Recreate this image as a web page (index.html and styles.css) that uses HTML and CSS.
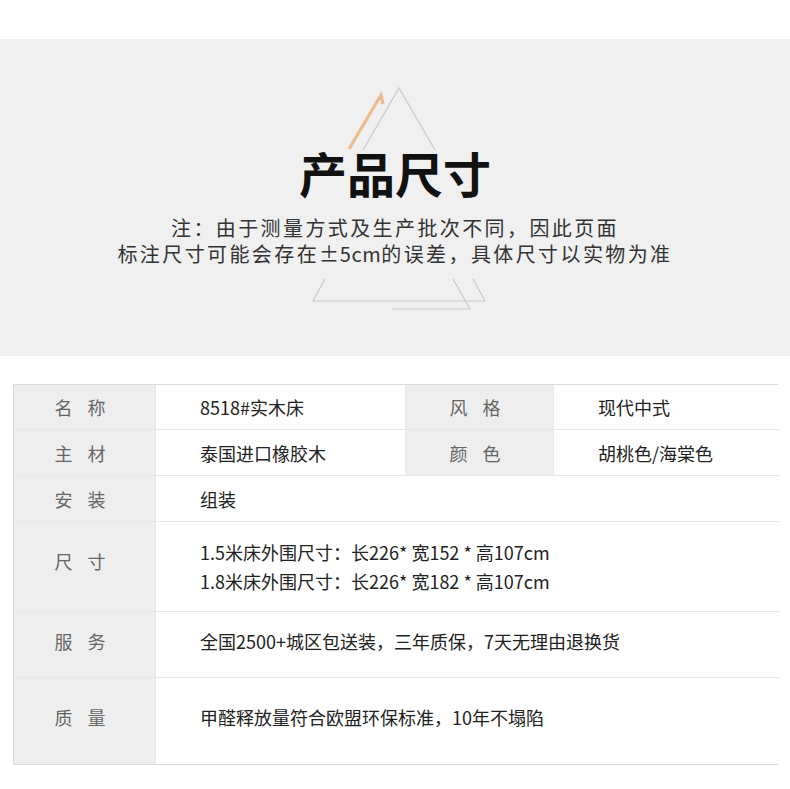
FILE: index.html
```html
<!DOCTYPE html>
<html lang="zh-CN">
<head>
<meta charset="utf-8">
<title>产品尺寸</title>
<link rel="stylesheet" href="styles.css">
</head>
<body>
<section class="hero">
  <svg class="deco" width="790" height="317" viewBox="0 0 790 317" aria-hidden="true">
    <g fill="none" stroke="#cacaca" stroke-width="1.2">
      <polyline points="363,111 399,49 435,111"/>
      <polyline points="325,240 313,262 485,262 473,240"/>
      <polyline points="453,240 470,270 392,270"/>
    </g>
    <polyline points="349,110 381,56 383,65" fill="none" stroke="#efbb8e" stroke-width="3.2"/>
  </svg>
  <h1 class="title">产品尺寸</h1>
  <p class="note"><span class="line">注：由于测量方式及生产批次不同，因此页面</span><span class="line">标注尺寸可能会存在<span class="tight">±5cm</span>的误差，具体尺寸以实物为准</span></p>
</section>

<div class="spec">
  <div class="cell label">名称</div>
  <div class="cell value">8518#实木床</div>
  <div class="cell label">风格</div>
  <div class="cell value">现代中式</div>

  <div class="cell label">主材</div>
  <div class="cell value">泰国进口橡胶木</div>
  <div class="cell label">颜色</div>
  <div class="cell value">胡桃色/海棠色</div>

  <div class="cell label">安装</div>
  <div class="cell value wide">组装</div>

  <div class="cell label size-label">尺寸</div>
  <div class="cell value wide two">1.5米床外围尺寸：长226* 宽152 * 高107cm<br>1.8米床外围尺寸：长226* 宽182 * 高107cm</div>

  <div class="cell label lift-s">服务</div>
  <div class="cell value wide lift-s">全国2500+城区包送装，三年质保，7天无理由退换货</div>

  <div class="cell label lift-m">质量</div>
  <div class="cell value wide lift-m">甲醛释放量符合欧盟环保标准，10年不塌陷</div>
</div>
</body>
</html>
```

FILE: styles.css
```css
* { box-sizing: border-box; }
html, body { margin: 0; padding: 0; background: #fff; }
body {
  font-family: "Noto Sans CJK SC", "Noto Sans", sans-serif;
  width: 790px;
}
.hero {
  position: relative;
  margin-top: 39px;
  height: 317px;
  background: #f0f0f0;
  padding-top: 105px;
  text-align: center;
}
.deco {
  position: absolute;
  left: 0;
  top: 0;
}
.title {
  position: relative;
  margin: 0;
  font-size: 48px;
  line-height: 56px;
  font-weight: 700;
  color: #111;
  letter-spacing: 0;
}
.note {
  position: relative;
  margin: 15px 0 0;
  font-size: 20px;
  line-height: 26px;
  letter-spacing: 2.4px;
  color: #333;
}
.note .line { display: block; height: 26px; }
.note .tight { letter-spacing: 0.6px; }
.spec {
  margin: 28px 0 0 13px;
  width: 765px;
  display: grid;
  grid-template-columns: 142px 250px 148px 225px;
  grid-template-rows: 45px 46px 46px 90px 66px 86px;
  border: 1px solid #dcdcdc;
}
.cell {
  display: flex;
  align-items: center;
  border-bottom: 1px solid #e6e6e6;
  border-right: 1px solid #e6e6e6;
}
.cell:nth-last-child(-n+2) { border-bottom: none; }
.label {
  background: #eeeeee;
  justify-content: center;
  font-size: 18px;
  color: #666;
  letter-spacing: 15px;
  padding-left: 6px;
}
.value {
  background: #fff;
  padding-left: 44px;
  font-size: 18px;
  color: #222;
}
.spec > .value:nth-child(4), .spec > .value:nth-child(8) { border-right: none; }
.wide { grid-column: span 3; border-right: none; }
.two { line-height: 29px; }
.size-label { padding-bottom: 12px; }
.lift-s { padding-bottom: 7px; }
.lift-m { padding-bottom: 9px; }
```
